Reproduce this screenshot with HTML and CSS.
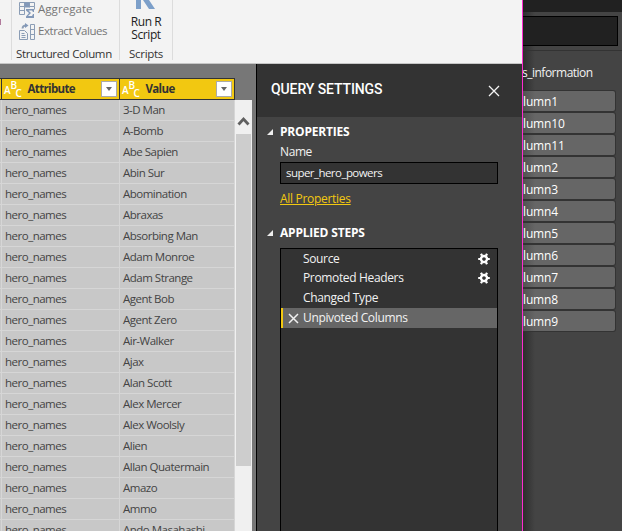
FILE: index.html
```html
<!DOCTYPE html>
<html lang="en">
<head>
<meta charset="utf-8">
<title>Query Editor</title>
<link rel="stylesheet" href="styles.css">
</head>
<body>
<div class="editor">
  <header class="ribbon">
    <div class="ribbon-edge"><i></i></div>
    <section class="group structured">
      <div class="command"><svg width="17" height="17" viewBox="0 0 17 17"><g fill="none" stroke="#8b9db5"><path d="M.5 1.500h15v4h-15zM5.500 1.500v12M10.500 1.500v5M.5 5.500v8h5M.5 9.500h5M15.500 5.500v3"/></g><path d="M5.500 1.500h5v5h-5z" fill="#8298b8"/><path d="M7 8h8v3h-1l-1-1.500H9.500L12 12l-3 3h4l1-2h1v4H7v-1.500l3-3.500-3-2.500z" fill="#8298b8"/></svg><span class="aggregate">Aggregate</span></div>
      <div class="command"><svg width="17" height="17" viewBox="0 0 17 17"><g fill="none" stroke="#8b9db5"><path d="M.5 7.500h5l3 3v6h-8zM2.500 10.500h3M2.500 12.500h4M2.500 14.500h4M11.500 1.500h4v15h-4zM11.500 6.500h4M11.500 11.500h4"/><path d="M3.500 5.500q0-3 3.500-3" stroke-width="1.800"/></g><path d="M6 0l3.500 2.500L6 5z" fill="#8298b8"/></svg><span class="extract">Extract Values</span></div>
      <div class="caption">Structured Column</div>
    </section>
    <section class="group scripts">
      <svg class="r-logo" width="26" height="9" viewBox="0 0 26 9"><path d="M3 0h5v9H3zM10 0h6l6 9h-6z" fill="#7c9fc9"/></svg>
      <div class="run">Run R<br>Script</div>
      <div class="caption">Scripts</div>
    </section>
  </header>
  <div class="workspace">
    <main class="data">
      <div class="grid" id="grid">
        <div class="head stub"></div>
        <div class="head"><span class="abc"><i>A</i><i>B</i><i>C</i></span><b>Attribute</b><span class="drop"></span></div>
        <div class="head"><span class="abc"><i>A</i><i>B</i><i>C</i></span><b>Value</b><span class="drop"></span></div>
      </div>
      <div class="scroll">
        <svg width="17" height="34" viewBox="0 0 17 34"><path d="M3.500 24.500L8.500 19l5 5.500" fill="none" stroke="#606060" stroke-width="2.800"/></svg>
        <div class="thumb"></div>
      </div>
    </main>
    <aside class="settings">
      <div class="title"><span>QUERY SETTINGS</span><svg width="12" height="12" viewBox="0 0 12 12"><path d="M1 1l10 10M11 1L1 11" stroke="#f4f4f4" stroke-width="1.300"/></svg></div>
      <div class="body">
        <h2><i class="arrow"></i><span>PROPERTIES</span></h2>
        <div class="name">Name</div>
        <div class="field">super_hero_powers</div>
        <div class="link"><a>All Properties</a></div>
        <h2 class="steps-title"><i class="arrow"></i><span>APPLIED STEPS</span></h2>
        <div class="steps">
          <div class="step"><span>Source</span><svg class="gear" width="12" height="12" viewBox="-6 -6 12 12"><circle r="3" fill="none" stroke="#fff" stroke-width="2.400"/><path d="M-5.800 0h2M3.800 0h2M-3-5.200l1 1.800M3-5.200l-1 1.800M-3 5.200l1-1.800M3 5.200l-1-1.800" stroke="#fff" stroke-width="2.200"/></svg></div>
          <div class="step"><span>Promoted Headers</span><svg class="gear" width="12" height="12" viewBox="-6 -6 12 12"><circle r="3" fill="none" stroke="#fff" stroke-width="2.400"/><path d="M-5.800 0h2M3.800 0h2M-3-5.200l1 1.800M3-5.200l-1 1.800M-3 5.200l1-1.800M3 5.200l-1-1.800" stroke="#fff" stroke-width="2.200"/></svg></div>
          <div class="step"><span>Changed Type</span></div>
          <div class="step selected"><svg class="remove" width="11" height="11" viewBox="0 0 11 11"><path d="M1 1l9 9M10 1L1 10" stroke="#f0f0f0" stroke-width="1.500"/></svg><span>Unpivoted Columns</span></div>
        </div>
      </div>
    </aside>
  </div>
</div>
<aside class="fields">
  <div class="topbar"></div>
  <div class="search"><div></div></div>
  <div class="table-name">s_information</div>
  <div class="pills" id="pills"></div>
</aside>
<script src="app.js"></script>
</body>
</html>
```
FILE: styles.css
```css
* { box-sizing: border-box; }
body {
  margin: 0;
  width: 622px;
  height: 531px;
  overflow: hidden;
  display: grid;
  grid-template-columns: 523px 99px;
  background: #444;
  font: 12px/16px "Open Sans", "Noto Sans", sans-serif;
  color: #f2f2f2;
  white-space: nowrap;
}
svg { display: block; flex: none; }
.editor {
  height: 531px;
  overflow: hidden;
  border-right: 1px solid #ff2bd0;
  display: flex;
  flex-direction: column;
}
.ribbon {
  flex: none;
  height: 64px;
  background: #f3f3f3;
  border-bottom: 1px solid #c6c6c6;
  display: flex;
  color: #333;
}
.ribbon-edge { width: 12px; height: 60px; border-right: 1px solid #dcdcdc; padding-top: 19px; }
.ribbon-edge i { display: block; width: 1px; height: 6px; background: #b07a9c; }
.group { height: 60px; border-right: 1px solid #dcdcdc; }
.structured { width: 108px; padding-left: 7px; }
.scripts { width: 53px; text-align: center; }
.command { display: flex; gap: 2px; height: 22px; align-items: center; color: #767676; }
.structured .command:first-child { margin-top: -2px; }
.command svg { margin-top: 1px; }
.command span { font-size: 11.500px; }
.aggregate { letter-spacing: .05px; }
.extract { letter-spacing: -.45px; }
.caption { font-size: 11.500px; letter-spacing: -.35px; height: 16px; margin-top: 4px; }
.structured .caption { margin-left: -3px; }
.r-logo { margin: 0 0 0 13px; }
.run { font-size: 12px; letter-spacing: -.4px; line-height: 13px; margin-top: 6px; color: #222; }
.scripts .caption { margin-top: 5px; letter-spacing: -.3px; }
.workspace { flex: 1; min-height: 0; display: flex; }
.data { width: 256px; padding-top: 14px; background: #777; display: flex; overflow: hidden; }
.grid { width: 235px; display: grid; grid-template-columns: 2px 118px 115px; grid-auto-rows: 21px; grid-template-rows: 22px; flex: none; }
.head {
  background: #f2c811;
  border: 1px solid #333;
  border-left: 0;
  color: #333;
  display: flex;
  align-items: center;
  padding-right: 2px;
}
.head.stub { padding: 0; }
.head b { font-size: 11.500px; letter-spacing: -.65px; margin-left: 6px; }
.abc { margin-left: 2px; display: flex; font: 600 10px/10px "Open Sans", sans-serif; color: #fff; height: 20px; }
.abc i { font-style: normal; width: 6px; height: 10px; margin-top: 6px; }
.abc i:nth-child(2) { margin: 1px 0 0 .5px; width: 5px; }
.abc i:nth-child(3) { margin-top: 9px; }
.drop { width: 16px; height: 16px; background: #fff; border: 1px solid #aaa; margin-left: auto; display: grid; place-items: center; }
.drop::after { content: ""; border: 3px solid transparent; border-top: 4px solid #666; border-bottom: 0; }
.cell { background: #c8c8c8; border-right: 1px solid #d6d6d6; border-bottom: 1px solid #d6d6d6; color: #444; padding-left: 3px; line-height: 20px; font-size: 11.500px; letter-spacing: -.5px; }
.cell.stub { padding: 0; }
.scroll { width: 17px; height: 431px; margin-top: 22px; background: #f0f0f0; }
.thumb { width: 15px; height: 332px; margin-left: 1px; background: #cdcdcd; }
.settings { flex: 1; border-left: 1px solid #000; background: #444; display: flex; flex-direction: column; }
.title { flex: none; height: 53px; background: #333; display: flex; align-items: center; justify-content: space-between; padding: 0 22px 2px 14px; font: 500 14px/20px Roboto, sans-serif; letter-spacing: -.1px; color: #fff; }
.title span { margin-top: -1px; }
.title svg { margin-top: 3px; }
.body { flex: 1; min-height: 0; padding: 7px 24px 0 23px; display: flex; flex-direction: column; }
h2 { font-size: 12px; line-height: 16px; font-weight: 700; letter-spacing: -.2px; margin: 0 0 0 -13px; color: #fff; display: flex; align-items: center; }
.arrow { width: 0; height: 0; border-left: 6px solid transparent; border-bottom: 6px solid #eee; margin-right: 7px; }
.name { margin-top: 4px; letter-spacing: -.4px; }
.field { height: 22px; border: 1px solid #000; background: #333; padding: 2px 5px; line-height: 16px; margin-top: 2px; font-size: 11.500px; letter-spacing: -.55px; }
.link { margin-top: 7px; letter-spacing: -.3px; }
.link a { color: #f2c811; text-decoration: underline; }
.steps-title { margin-top: 18px; }
.steps { flex: 1; margin-top: 7px; border: 1px solid #000; border-bottom: 0; background: #333; }
.step { height: 20px; display: flex; align-items: center; padding: 0 7px 0 22px; letter-spacing: -.35px; }
.step:first-child { height: 19px; }
.step span { line-height: 18px; }
.gear { margin-left: auto; }
.selected { background: #666; border-left: 2px solid #f2c811; padding-left: 5px; }
.remove { margin-right: 4px; }
.fields { height: 531px; overflow: hidden; background: linear-gradient(90deg, #2e2e2e, #444 12px); }
.topbar { height: 12px; background: #212121; }
.search { height: 39px; padding: 4px 4px 0 0; border-bottom: 1px solid #333; }
.search div { height: 30px; border: 1px solid #000; border-left: 0; background: #212121; }
.table-name { margin: 14px 0 0 -1px; height: 16px; letter-spacing: -.5px; }
.pills { margin-top: 9px; }
.pill { width: 93px; height: 22px; border: 1px solid #333; border-left: 0; border-radius: 0 3px 3px 0; background: linear-gradient(90deg, #525252, #666 12px); line-height: 21px; letter-spacing: -.15px; color: #fff; overflow: hidden; }
```
FILE: app.js
```js
const names = ["3-D Man", "A-Bomb", "Abe Sapien", "Abin Sur", "Abomination", "Abraxas", "Absorbing Man", "Adam Monroe", "Adam Strange", "Agent Bob", "Agent Zero", "Air-Walker", "Ajax", "Alan Scott", "Alex Mercer", "Alex Woolsly", "Alien", "Allan Quatermain", "Amazo", "Ammo", "Ando Masahashi"];
const grid = document.getElementById("grid");
const add = (parent, cls, text) => {
  const el = document.createElement("div");
  el.className = cls;
  el.textContent = text;
  parent.append(el);
};
names.forEach((name) => {
  add(grid, "cell stub", "");
  add(grid, "cell", "hero_names");
  add(grid, "cell", name);
});
["1", "10", "11", "2", "3", "4", "5", "6", "7", "8", "9"].forEach((n) => add(document.getElementById("pills"), "pill", "lumn" + n));
```
